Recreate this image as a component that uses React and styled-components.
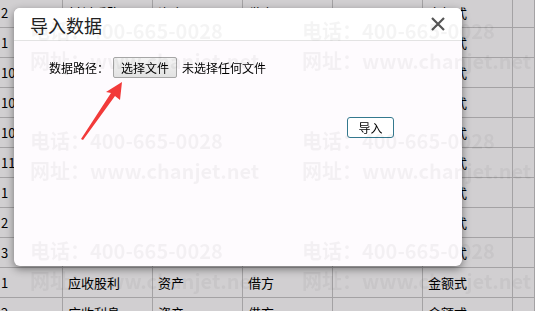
import React from "react";
import styled, { createGlobalStyle } from "styled-components";

const GlobalStyle = createGlobalStyle`
  html, body {
    margin: 0;
    padding: 0;
    overflow: hidden;
    background: #d1cfd1;
    font-family: "Noto Sans CJK SC", "Noto Sans", sans-serif;
  }
`;

const Page = styled.div`
  width: 535px;
  height: 311px;
  overflow: hidden;
`;

const Sheet = styled.div`
  display: grid;
  grid-template-columns: 63px 90px 90px 90px 90px 90px 1fr;
  grid-auto-rows: 30px;
  margin-top: -2px;
`;

const Cell = styled.div`
  box-sizing: border-box;
  border-right: 1px solid #a4a2a4;
  border-bottom: 1px solid #a4a2a4;
  padding-left: ${p => (p.first ? "1px" : "5px")};
  font-size: 13px;
  line-height: 29px;
  color: #000;
  white-space: nowrap;
  overflow: hidden;
`;

const Mask = styled.div`
  position: fixed;
  left: 14px;
  top: 8px;
  width: 448px;
  height: 258px;
  border-radius: 6px;
  background: #fefbfe;
  box-shadow: 0 3px 9px rgba(0, 0, 0, 0.45);
  display: flex;
  flex-direction: column;
  overflow: hidden;
`;

const Header = styled.div`
  height: 32px;
  background: #fff;
  border-bottom: 1px solid #e3e3e3;
  display: flex;
  align-items: center;
  justify-content: space-between;
  padding: 0 17px 0 16px;
`;

const Title = styled.h3`
  margin: 2px 0 0;
  font-size: 18px;
  font-weight: normal;
  color: #222;
`;

const Close = styled.button`
  border: 0;
  background: none;
  padding: 0;
  width: 14px;
  height: 14px;
  margin-top: -1px;
  display: flex;
`;

const Body = styled.div`
  position: relative;
  flex: 1;
  display: flex;
  flex-direction: column;
  padding: 16px 68px 0 35px;
`;

const FieldRow = styled.div`
  display: flex;
  align-items: center;
  font-size: 12px;
  color: #000;
`;

const Label = styled.span`
  margin-right: 4px;
`;

const FileButton = styled.button`
  height: 21px;
  width: 64px;
  padding: 0;
  border: 1px solid #a6a6a6;
  border-radius: 2px;
  background: linear-gradient(#f4f4f4, #e2e2e2);
  font-family: inherit;
  font-size: 12px;
  color: #000;
  margin-right: 5px;
`;

const ActionRow = styled.div`
  display: flex;
  justify-content: flex-end;
  margin-top: 39px;
`;

const ImportButton = styled.button`
  width: 47px;
  height: 21px;
  padding: 0;
  border: 1px solid #34788e;
  border-radius: 3px;
  background: #fff;
  font-family: inherit;
  font-size: 12px;
  color: #000;
`;

const Arrow = styled.svg`
  position: absolute;
  left: 60px;
  top: 38px;
  width: 60px;
  height: 66px;
`;

const Watermark = styled.div`
  position: fixed;
  inset: 0;
  pointer-events: none;
  display: grid;
  grid-template-columns: repeat(2, 272px);
  grid-auto-rows: 110px;
  padding: 16px 0 0 30px;
  font-size: 20px;
  font-weight: bold;
  line-height: 30px;
  color: rgba(0, 0, 0, 0.045);
  white-space: nowrap;
`;

const rows = [
  ["2", "材料采购", "资产", "借方", "", "金额式"],
  ["1", "库存现金", "资产", "借方", "", "金额式"],
  ["10", "银行存款", "资产", "借方", "", "金额式"],
  ["10", "其他货币资金", "资产", "借方", "", "金额式"],
  ["10", "交易性金融资产", "资产", "借方", "", "金额式"],
  ["110", "应收票据", "资产", "借方", "", "金额式"],
  ["1", "应收账款", "资产", "借方", "", "金额式"],
  ["2", "预付账款", "资产", "借方", "", "金额式"],
  ["3", "其他应收款", "资产", "借方", "", "金额式"],
  ["1", "应收股利", "资产", "借方", "", "金额式"],
  ["2", "应收利息", "资产", "借方", "", "金额式"]
];

const App = () => (
  <Page>
    <GlobalStyle />
    <Sheet>
      {rows.map((r, i) => (
        <React.Fragment key={i}>
          {r.map((c, j) => (
            <Cell key={j} first={j === 0}>
              {c}
            </Cell>
          ))}
          <Cell />
        </React.Fragment>
      ))}
    </Sheet>

    <Mask>
      <Header>
        <Title>导入数据</Title>
        <Close aria-label="关闭">
          <svg width="14" height="14" viewBox="0 0 14 14">
            <path d="M1 1 L13 13 M13 1 L1 13" stroke="#555" strokeWidth="2.2" />
          </svg>
        </Close>
      </Header>
      <Body>
        <FieldRow>
          <Label>数据路径：</Label>
          <FileButton>选择文件</FileButton>
          <span>未选择任何文件</span>
        </FieldRow>
        <ActionRow>
          <ImportButton>导入</ImportButton>
        </ActionRow>
        <Arrow viewBox="0 0 60 66">
          <polygon
            points="48,3 46,21 41,17 9,61 7,60 37,14 32,13"
            fill="#f23a3a"
          />
        </Arrow>
      </Body>
    </Mask>

    <Watermark>
      {[0, 1, 2, 3, 4, 5].map(i => (
        <div key={i}>
          <div>电话：400-665-0028</div>
          <div>网址：www.chanjet.net</div>
        </div>
      ))}
    </Watermark>
  </Page>
);

export default App;
